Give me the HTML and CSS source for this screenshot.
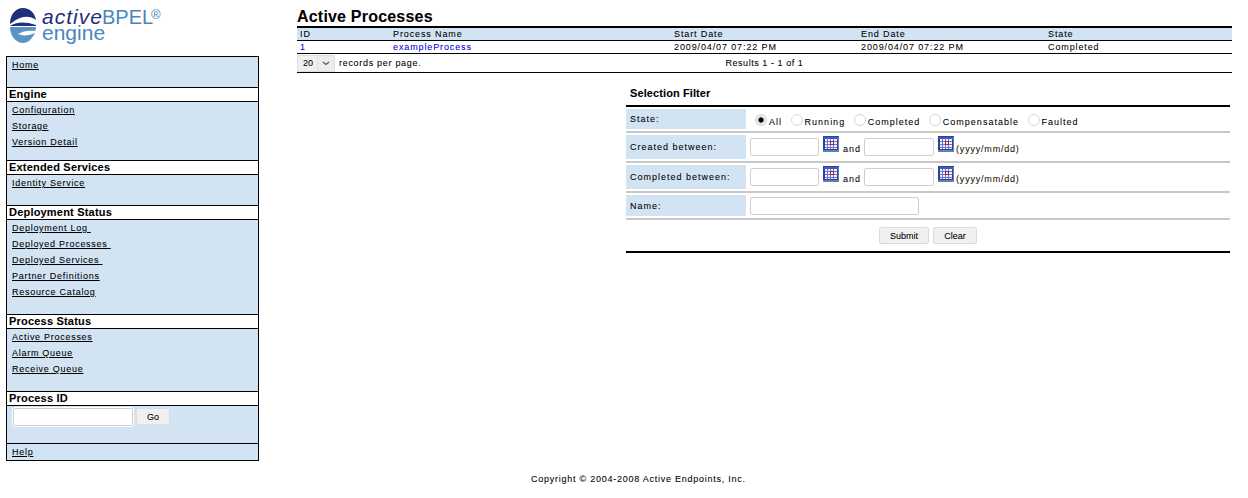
FILE: index.html
```html
<!DOCTYPE html>
<html lang="en">
<head>
  <meta charset="UTF-8">
  <title>Active Processes</title>
  <link rel="stylesheet" href="styles.css">
</head>
<body>
  <svg width="0" height="0" class="defs">
    <symbol id="cal" viewBox="0 0 16 16">
      <rect x="0" y="0" width="16" height="16" fill="#2f3f9f"/>
      <rect x="15" y="1" width="1" height="15" fill="#6f7fa8"/>
      <rect x="0" y="14" width="16" height="2" fill="#5f80b4"/>
      <rect x="1" y="1" width="14" height="2" fill="#3c5cc0"/>
      <rect x="2" y="3" width="12" height="10" fill="#eef0fa"/>
      <path d="M2 5.500h12M2 8.500h12M2 11.500h12M4.500 3v10M7.500 3v10M10.500 3v10" stroke="#6a78c8" stroke-width="1" fill="none"/>
      <rect x="7.500" y="5.500" width="3" height="3" fill="none" stroke="#a02050" stroke-width="1"/>
    </symbol>
  </svg>
  <div class="page">
    <div class="side">
      <svg class="logo" width="156" height="40" viewBox="0 0 156 40">
        <path d="M1 19C1 9 7 3 14 3c7 0 12 5 13 12-5-4-11-4-16-2-4 1.500-7 4-10 6z" fill="#1f2f7a"/>
        <path d="M1 21c6-4 14-5 26-1v1z" fill="#1f2f7a"/>
        <path d="M1 22h26c0 2-.5 3-1 4-6-1-12 0-17 3 4 2 11 2 17-1-3 6-7 10-12 10C7 38 1 31 1 22z" fill="#5b94c4"/>
        <text x="33" y="19" class="logo-a">active</text>
        <text x="93" y="19" class="logo-b">BPEL</text>
        <text x="142" y="14" class="logo-r">®</text>
        <text x="33" y="35" class="logo-e">engine</text>
      </svg>
      <nav class="menu">
        <div class="sec home"><a href="#">Home</a></div>
        <h3>Engine</h3>
        <div class="sec engine"><a href="#">Configuration</a><a href="#">Storage</a><a href="#">Version Detail</a></div>
        <h3>Extended Services</h3>
        <div class="sec ext"><a href="#">Identity Service</a></div>
        <h3>Deployment Status</h3>
        <div class="sec dep"><a href="#">Deployment Log&nbsp;</a><a href="#">Deployed Processes&nbsp;</a><a href="#">Deployed Services&nbsp;</a><a href="#">Partner Definitions</a><a href="#">Resource Catalog</a></div>
        <h3>Process Status</h3>
        <div class="sec proc"><a href="#">Active Processes</a><a href="#">Alarm Queue</a><a href="#">Receive Queue</a></div>
        <h3>Process ID</h3>
        <div class="sec pid"><input type="text" class="box pid-input"><button class="btn go">Go</button></div>
        <div class="sec help"><a href="#">Help</a></div>
      </nav>
    </div>
    <div class="main">
      <h1>Active Processes</h1>
      <table class="list">
        <tr class="head"><th class="c-id">ID</th><th class="c-name">Process Name</th><th class="c-date">Start Date</th><th class="c-date">End Date</th><th>State</th></tr>
        <tr><td><a href="#">1</a></td><td><a href="#">exampleProcess</a></td><td>2009/04/07 07:22 PM</td><td>2009/04/07 07:22 PM</td><td>Completed</td></tr>
      </table>
      <div class="pager">
        <div class="pagesize"><span class="sel"><span class="sel-val">20</span><span class="sel-arrow"><svg width="8" height="5" viewBox="0 0 8 5"><path d="M1 1l3 2.500 3-2.500" fill="none" stroke="#555" stroke-width="1.200"/></svg></span></span>records per page.</div>
        <div class="results">Results 1 - 1 of 1</div>
      </div>
      <div class="filter">
        <h2>Selection Filter</h2>
        <div class="row r-state">
          <div class="lbl">State:</div>
          <div class="val states">
            <span class="opt"><i class="radio on"></i>All</span>
            <span class="opt"><i class="radio"></i>Running</span>
            <span class="opt"><i class="radio"></i>Completed</span>
            <span class="opt"><i class="radio"></i>Compensatable</span>
            <span class="opt"><i class="radio"></i>Faulted</span>
          </div>
        </div>
        <div class="row r-date">
          <div class="lbl">Created between:</div>
          <div class="val">
            <input type="text" class="box date"><svg class="cal"><use href="#cal"/></svg><span class="and">and</span><input type="text" class="box date"><svg class="cal"><use href="#cal"/></svg><span class="fmt">(yyyy/mm/dd)</span>
          </div>
        </div>
        <div class="row r-date">
          <div class="lbl">Completed between:</div>
          <div class="val">
            <input type="text" class="box date"><svg class="cal"><use href="#cal"/></svg><span class="and">and</span><input type="text" class="box date"><svg class="cal"><use href="#cal"/></svg><span class="fmt">(yyyy/mm/dd)</span>
          </div>
        </div>
        <div class="row r-name">
          <div class="lbl">Name:</div>
          <div class="val"><input type="text" class="box name"></div>
        </div>
        <div class="actions"><button class="btn sub">Submit</button><button class="btn clr">Clear</button></div>
      </div>
    </div>
  </div>
  <div class="foot">Copyright © 2004-2008 Active Endpoints, Inc.</div>
</body>
</html>
```

FILE: styles.css
```css
html, body {
  margin: 0;
  padding: 0;
  background: #fff;
}
body {
  font-family: "Liberation Sans", Arial, sans-serif;
  font-size: 9px;
  color: #000;
  letter-spacing: 1px;
  -webkit-text-stroke: 0.07px;
  height: 498px;
  overflow: hidden;
}
.defs {
  display: block;
  height: 0;
}
.page {
  display: flex;
  height: 473px;
  padding-left: 6px;
}
.side {
  width: 253px;
  flex: none;
}
.logo {
  display: block;
  margin: 5px 0 11px 3px;
}
.logo text {
  letter-spacing: 0;
  -webkit-text-stroke: 0;
}
.logo-a {
  font: italic 21px "Liberation Sans", sans-serif;
  letter-spacing: 1px !important;
  fill: #1f2f7a;
}
.logo-b {
  font: 20px "Liberation Sans", sans-serif;
  fill: #4a86bc;
}
.logo-r {
  font: 13px "Liberation Sans", sans-serif;
  fill: #4a86bc;
}
.logo-e {
  font: 21px "Liberation Sans", sans-serif;
  fill: #4a86bc;
}
.menu {
  border: 1px solid #000;
  background: #d2e3f3;
}
.menu h3 {
  margin: 0;
  height: 13px;
  line-height: 13px;
  font-size: 11px;
  letter-spacing: 0.2px;
  background: #fff;
  border-top: 1px solid #000;
  border-bottom: 1px solid #000;
  padding-left: 2px;
}
.sec {
  padding: 0 5px;
  box-sizing: border-box;
  letter-spacing: 0.72px;
}
.sec a {
  display: block;
  width: fit-content;
  height: 16px;
  line-height: 16px;
  color: #000;
}
.home { height: 30px; }
.engine { height: 58px; }
.ext { height: 30px; }
.dep { height: 94px; }
.proc { height: 62px; }
.pid {
  height: 37px;
  display: flex;
  align-items: flex-start;
  padding-top: 2px;
  gap: 3px;
}
.help {
  height: 17px;
  border-top: 1px solid #000;
}
.box {
  box-sizing: border-box;
  height: 18px;
  padding: 0;
  margin: 0;
  background: #fff;
  border: 1px solid #cfcfcf;
  border-radius: 2px;
}
.pid-input {
  width: 120px;
  outline: 1px solid #fff;
  margin-left: 1px;
}
.btn {
  box-sizing: border-box;
  height: 17px;
  padding: 0;
  font: 9px "Liberation Sans", sans-serif;
  letter-spacing: 0;
  color: #000;
  background: #f0f0f0;
  border: 1px solid #dcdcdc;
  border-radius: 2px;
}
.go { width: 34px; }
.sub { width: 50px; }
.clr { width: 44px; }
.main {
  margin-left: 38px;
  width: 935px;
  flex: none;
}
h1 {
  margin: 0;
  padding-top: 8px;
  height: 18px;
  line-height: 17px;
  font-size: 16px;
  letter-spacing: 0.2px;
}
.list {
  width: 935px;
  border-collapse: collapse;
  table-layout: fixed;
  border-top: 2px solid #000;
  letter-spacing: 0.88px;
}
.list th, .list td {
  height: 12px;
  padding: 0 0 0 3px;
  line-height: 12px;
  text-align: left;
  font-weight: normal;
}
.list td {
  border-top: 1px solid #000;
  border-bottom: 1px solid #000;
}
.head th {
  background: #d2e3f3;
}
.c-id { width: 93px; }
.c-name { width: 281px; }
.c-date { width: 187px; }
.list th.c-id, .list th.c-name, .list th.c-date {
  box-sizing: border-box;
}
.list a {
  color: #0000e0;
  text-decoration: none;
}
.pager {
  display: flex;
  align-items: center;
  height: 18px;
  border-bottom: 1px solid #000;
  letter-spacing: 0.7px;
}
.pagesize {
  display: flex;
  align-items: center;
}
.sel {
  box-sizing: border-box;
  display: flex;
  width: 38px;
  height: 17px;
  margin-right: 4px;
  background: #f0f0f0;
  border: 1px solid #ddd;
  letter-spacing: 0;
}
.sel-val {
  width: 19px;
  line-height: 15px;
  padding-left: 5px;
  box-sizing: border-box;
}
.sel-arrow {
  flex: 1;
  display: flex;
  align-items: center;
  justify-content: center;
  background: #ececec;
  border-left: 1px solid #e2e2e2;
}
.results {
  margin-left: 304px;
  letter-spacing: 0.55px;
}
.filter {
  margin: 13px 0 0 329px;
  width: 604px;
}
h2 {
  margin: 0;
  padding-left: 4px;
  height: 19px;
  line-height: 14px;
  font-size: 11px;
  letter-spacing: 0.1px;
  border-bottom: 2px solid #000;
}
.row {
  display: flex;
  border-bottom: 2px solid #c8c8c8;
  padding: 2px 0;
}
.r-state { height: 20px; margin-top: 2px; padding-top: 0; }
.r-date { height: 24px; }
.r-name { height: 21px; }
.lbl {
  width: 120px;
  flex: none;
  display: flex;
  align-items: center;
  padding-left: 4px;
  box-sizing: border-box;
  background: #d2e3f3;
}
.val {
  display: flex;
  align-items: center;
  padding-left: 4px;
}
.date { width: 69px; }
.and + .date { width: 70px; }
.name { width: 169px; }
.cal {
  width: 16px;
  height: 16px;
  margin: -7px 2px 0 4px;
}
.and {
  margin: 3px 3px 0 2px;
}
.fmt {
  margin-top: 4px;
  letter-spacing: 0.8px;
  color: #201000;
}
.states {
  padding-left: 9px;
  padding-top: 3px;
  gap: 8.6px;
}
.opt {
  display: flex;
  align-items: center;
  gap: 2px;
  padding-top: 2px;
}
.radio {
  box-sizing: border-box;
  display: block;
  width: 12px;
  height: 12px;
  border-radius: 50%;
  border: 1px solid #d8d8d8;
  background: #fff;
  margin-top: -4px;
}
.radio.on {
  background: radial-gradient(circle, #000 0 2.200px, #e6e6e6 3px);
}
.actions {
  display: flex;
  justify-content: center;
  gap: 4px;
  padding-top: 7px;
  box-sizing: border-box;
  border-bottom: 2px solid #000;
  height: 33px;
}
.foot {
  padding-left: 531px;
  line-height: 12px;
  letter-spacing: 0.75px;
}
```
